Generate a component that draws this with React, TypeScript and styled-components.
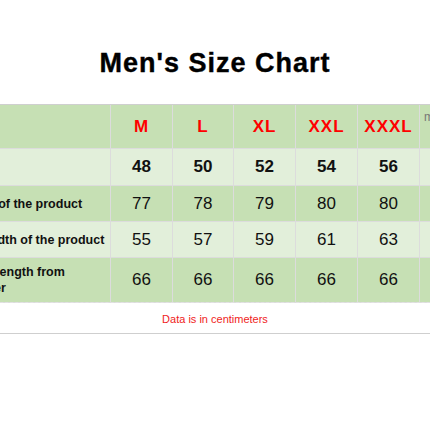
import { Fragment } from "react";
import styled, { createGlobalStyle } from "styled-components";

const GlobalStyle = createGlobalStyle`
  html, body {
    margin: 0;
    padding: 0;
    background: #ffffff;
    overflow: hidden;
  }
  body {
    font-family: "Liberation Sans", Arial, sans-serif;
  }
`;

const Page = styled.div`
  width: 430px;
  height: 430px;
  overflow: hidden;
  background: #ffffff;
`;

const Title = styled.h1`
  margin: 48px 0 0;
  font-size: 27px;
  line-height: 30px;
  font-weight: bold;
  letter-spacing: 1px;
  text-align: center;
  color: #000;
  -webkit-text-stroke: 0.4px #000;
`;

const Chart = styled.div`
  margin: 26px 0 0 -60px;
  width: 600px;
  display: grid;
  grid-template-columns: 170px 61px 60px 61px 61px 61px 62px;
  grid-template-rows: 43px 36px 35px 35px 44px;
  column-gap: 1px;
  row-gap: 1px;
  background: #dcdcdc;
  border-top: 1px solid #cfcfcf;
  border-bottom: 1px dashed #e2e2e2;
`;

const Cell = styled.div<{ $light?: boolean }>`
  display: flex;
  align-items: center;
  justify-content: center;
  background: ${({ $light }) => ($light ? "#e2efda" : "#c6e0b4")};
  color: #111;
  font-size: 17px;
`;

const Label = styled(Cell)`
  justify-content: flex-start;
  padding-left: 13px;
  font-size: 12.5px;
  line-height: 16px;
  font-weight: bold;
`;

const SizeName = styled(Cell)`
  color: #ff0000;
  font-weight: bold;
  letter-spacing: 1px;
`;

const Bold = styled(Cell)`
  font-weight: bold;
`;

const Extra = styled(Cell)`
  align-items: flex-start;
  justify-content: flex-start;
  padding: 4px 4px 0;
  font-size: 12px;
  line-height: 16px;
  color: #777;
`;

const Note = styled.div`
  width: 430px;
  height: 29px;
  padding-top: 1px;
  display: flex;
  align-items: center;
  justify-content: center;
  font-size: 11px;
  color: #f01c1c;
  border-bottom: 1px solid #cfcfcf;
`;

const sizes = ["M", "L", "XL", "XXL", "XXXL"];
const eu = [48, 50, 52, 54, 56];

const rows = [
  { label: "Length of the product", values: [77, 78, 79, 80, 80], light: false },
  { label: "Bust width of the product", values: [55, 57, 59, 61, 63], light: true },
  { label: "Sleeve length from shoulder", values: [66, 66, 66, 66, 66], light: false },
];

export default function App() {
  return (
    <Page>
      <GlobalStyle />
      <Title>Men's Size Chart</Title>
      <Chart>
        <Label />
        {sizes.map((s) => (
          <SizeName key={s}>{s}</SizeName>
        ))}
        <Extra>more</Extra>

        <Label $light />
        {eu.map((n) => (
          <Bold key={n} $light>
            {n}
          </Bold>
        ))}
        <Extra $light />

        {rows.map((r) => (
          <Fragment key={r.label}>
            <Label $light={r.light}>{r.label}</Label>
            {r.values.map((v, i) => (
              <Cell key={i} $light={r.light}>
                {v}
              </Cell>
            ))}
            <Extra $light={r.light} />
          </Fragment>
        ))}
      </Chart>
      <Note>Data is in centimeters</Note>
    </Page>
  );
}
